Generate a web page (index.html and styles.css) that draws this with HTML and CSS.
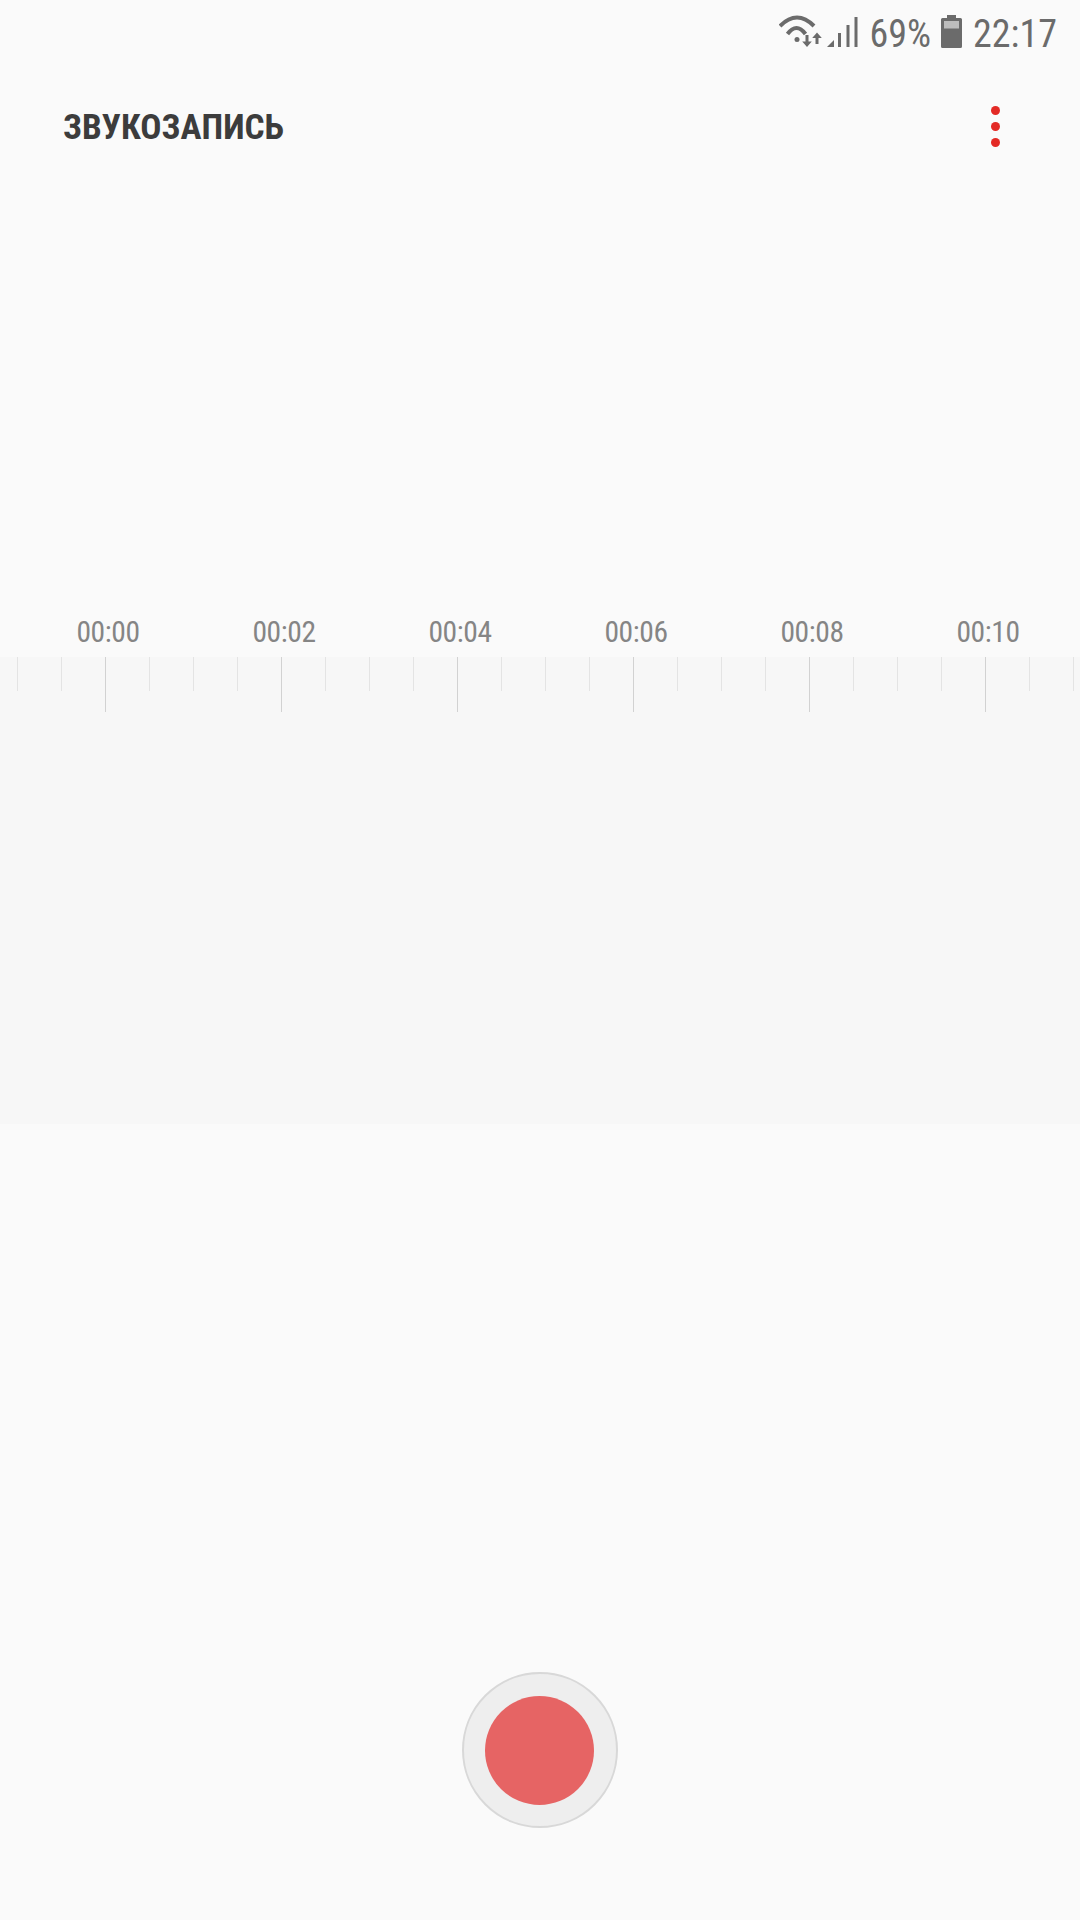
FILE: index.html
```html
<!DOCTYPE html>
<html lang="ru">
<head>
    <meta charset="UTF-8">
    <meta name="viewport" content="width=device-width, initial-scale=1.0">
    <title>Звукозапись</title>
    <link rel="stylesheet" href="styles.css">
</head>
<body>
    <div class="statusBar">
        <svg class="wifiIcon" width="44" height="34" viewBox="0 0 44 34">
            <path d="M1 12 Q18 -5 35 12" class="wifiArc"/>
            <path d="M8.500 20 Q17.500 8 26.500 20" class="wifiArc"/>
            <circle cx="18" cy="25.500" r="2.500" class="iconFill"/>
            <path d="M26.500 21h3v6.500h3.300l-4.800 5.500-4.800-5.500h3.300z" class="iconFill"/>
            <path d="M38 18.500l4.800 5.500h-3.300v6h-3v-6h-3.300z" class="iconFill"/>
        </svg>
        <svg class="signalIcon" width="32" height="32" viewBox="0 0 32 32">
            <path d="M0 31l7-7v7z" class="iconFill"/>
            <rect x="11" y="17" width="3" height="14" class="iconFill"/>
            <rect x="19.500" y="9" width="3" height="22" class="iconFill"/>
            <rect x="27.500" y="1" width="3" height="30" class="iconFill"/>
        </svg>
        <span class="statusText batteryText">69%</span>
        <svg class="batteryIcon" width="21" height="33" viewBox="0 0 21 33">
            <path d="M6 0h9v3h4.500a1.500 1.500 0 0 1 1.500 1.500v27a1.500 1.500 0 0 1-1.500 1.500h-18a1.500 1.500 0 0 1-1.500-1.500v-27a1.500 1.500 0 0 1 1.500-1.500h4.500z" class="iconFill"/>
            <rect x="3" y="6" width="15" height="7.500" fill="#bdbdbd"/>
        </svg>
        <span class="statusText">22:17</span>
    </div>

    <div class="appBar">
        <div class="appTitle">ЗВУКОЗАПИСЬ</div>
        <div class="moreMenu">
            <span class="menuDot"></span>
            <span class="menuDot"></span>
            <span class="menuDot"></span>
        </div>
    </div>

    <div class="timeLabels">
        <div class="timeLabel">00:00</div>
        <div class="timeLabel">00:02</div>
        <div class="timeLabel">00:04</div>
        <div class="timeLabel">00:06</div>
        <div class="timeLabel">00:08</div>
        <div class="timeLabel">00:10</div>
    </div>
    <div class="waveBand"></div>

    <div class="recordArea">
        <div class="recordButton">
            <div class="recordDot"></div>
        </div>
    </div>
</body>
</html>
```

FILE: styles.css
```css
body{
    margin: 0;
    width: 1080px;
    height: 1920px;
    overflow: hidden;
    background-color: #fafafa;
    font-family: "Roboto", sans-serif;
    display: flex;
    flex-direction: column;
}
.statusBar{
    height: 66px;
    box-sizing: border-box;
    padding-right: 23px;
    display: flex;
    justify-content: flex-end;
    align-items: center;
    color: #6b6b6b;
}
.statusText{
    font-size: 38px;
    font-stretch: condensed;
    line-height: 66px;
    margin-top: 2px;
}
.batteryText{
    margin-left: 11px;
}
.iconFill{
    fill: #6b6b6b;
}
.wifiArc{
    fill: none;
    stroke: #6b6b6b;
    stroke-width: 4;
}
.wifiIcon{
    margin-bottom: 4px;
}
.signalIcon{
    margin-left: 4px;
    margin-bottom: 2px;
}
.batteryIcon{
    margin-left: 10px;
    margin-right: 11px;
    margin-bottom: 3px;
}
.appBar{
    height: 120px;
    box-sizing: border-box;
    padding: 0 40px 0 63px;
    display: flex;
    justify-content: space-between;
    align-items: center;
}
.appTitle{
    font-size: 35.200px;
    font-weight: 700;
    font-stretch: condensed;
    color: #3c3c3c;
    margin-top: 2px;
}
.moreMenu{
    width: 9px;
    margin-right: 40px;
    display: flex;
    flex-direction: column;
    gap: 7px;
}
.menuDot{
    width: 9px;
    height: 9px;
    border-radius: 50%;
    background-color: #e32a25;
}
.timeLabels{
    margin-top: 411px;
    height: 60px;
    padding-left: 20px;
    display: flex;
    align-items: flex-end;
}
.timeLabel{
    width: 176px;
    text-align: center;
    font-size: 29.500px;
    letter-spacing: -0.400px;
    font-stretch: condensed;
    line-height: 50px;
    color: #858585;
}
.waveBand{
    height: 467px;
    background-color: #f7f7f7;
    background-image:
        linear-gradient(to right, #d2d2d2 1.500px, transparent 1.500px),
        linear-gradient(to right, #e4e4e4 1.500px, transparent 1.500px);
    background-repeat: repeat-x;
    background-size: 176px 55px, 44px 34px;
    background-position: 105px 0, 17px 0;
}
.recordArea{
    flex: 1;
    display: flex;
    justify-content: center;
    padding-top: 548px;
    padding-right: 1px;
}
.recordButton{
    width: 156px;
    height: 156px;
    box-sizing: border-box;
    border: 2px solid #d8d8d8;
    border-radius: 50%;
    background-color: #eeeeee;
    display: flex;
    justify-content: center;
    align-items: center;
}
.recordDot{
    width: 109px;
    height: 109px;
    border-radius: 50%;
    background-color: #e66464;
}
```
